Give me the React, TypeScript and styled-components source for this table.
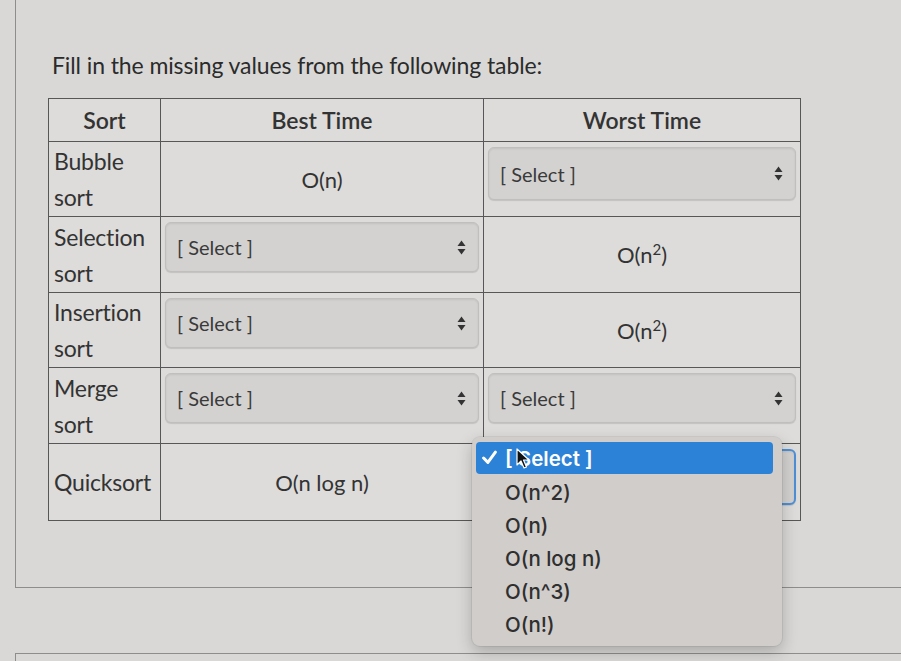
import React from "react";
import styled, { createGlobalStyle } from "styled-components";

const GlobalStyle = createGlobalStyle`
  html, body { margin: 0; padding: 0; }
  body {
    background: #d9d8d6;
    font-family: Lato, "Open Sans", sans-serif;
    color: #2e2e2e;
    width: 901px;
    height: 661px;
    overflow: hidden;
  }
`;

const Page = styled.div`
  padding-left: 15px;
`;

const Card = styled.section`
  border-left: 1px solid #8e8d8b;
  border-bottom: 1px solid #8e8d8b;
  padding: 52px 0 66px 32px;
`;

const NextCard = styled.section`
  margin-top: 65px;
  border-left: 1px solid #8e8d8b;
  border-top: 1px solid #8e8d8b;
  height: 20px;
`;

const Title = styled.h2`
  margin: 0 0 19px 4px;
  font-size: 23px;
  line-height: 27px;
  font-weight: 400;
  color: #2b2b2b;
  letter-spacing: -0.1px;
`;

const Table = styled.table`
  border-collapse: collapse;
  table-layout: fixed;
  width: 752px;
  background: #dddcda;
`;

const Row = styled.tr<{ $h: number }>`
  height: ${(p) => p.$h}px;
`;

const Head = styled.th`
  border: 1px solid #575757;
  font-size: 23px;
  font-weight: 600;
  color: #333;
  padding: 0;
  text-align: center;
  vertical-align: middle;
`;

const Label = styled.td`
  border: 1px solid #575757;
  font-size: 23px;
  line-height: 36px;
  padding: 1px 2px 1px 5px;
  color: #333;
  vertical-align: middle;
  letter-spacing: -0.2px;
`;

const Cell = styled.td<{ $align?: "top" | "middle" }>`
  position: relative;
  border: 1px solid #575757;
  padding: 5px 4px;
  font-size: 22px;
  text-align: center;
  vertical-align: ${(p) => p.$align ?? "middle"};
  color: #333;
`;

const SelectBox = styled.div<{ $focused?: boolean; $h?: number }>`
  display: flex;
  align-items: center;
  justify-content: space-between;
  height: ${(p) => p.$h ?? 50}px;
  box-sizing: border-box;
  padding: 0 12px 0 11px;
  border-radius: 6px;
  background: #d3d2d0;
  border: ${(p) => (p.$focused ? "2px solid #4d8fd6" : "1px solid #c0bfbd")};
  box-shadow: inset 0 1px 2px rgba(0, 0, 0, 0.08), 0 1px 1px rgba(0, 0, 0, 0.12);
  font-size: 20px;
  color: #3a3a3a;
  text-align: left;
`;

const Sup = styled.sup`
  font-size: 15px;
  line-height: 0;
`;

const Menu = styled.div`
  position: absolute;
  left: -12px;
  top: -7px;
  width: 310px;
  box-sizing: border-box;
  padding: 5px 9px 5px 4px;
  background: #d1cdcb;
  border-radius: 8px;
  box-shadow: 0 6px 16px rgba(0, 0, 0, 0.22), 0 0 0 1px rgba(0, 0, 0, 0.06);
  z-index: 5;
`;

const MenuItem = styled.div<{ $active?: boolean }>`
  position: relative;
  display: flex;
  align-items: center;
  height: ${(p) => (p.$active ? 32 : 33)}px;
  margin-bottom: ${(p) => (p.$active ? 2 : 0)}px;
  padding-left: 29px;
  border-radius: 4px;
  font-family: Inter, "Liberation Sans", sans-serif;
  font-size: 20.5px;
  font-weight: ${(p) => (p.$active ? 600 : 500)};
  color: ${(p) => (p.$active ? "#ffffff" : "#2f2f2f")};
  background: ${(p) => (p.$active ? "#2c82d6" : "transparent")};
  text-align: left;
`;

const Check = styled.span`
  position: absolute;
  left: 6px;
  top: 8px;
  display: flex;
`;

const Cursor = styled.span`
  position: absolute;
  left: 40px;
  top: 6px;
  display: flex;
`;

const Arrows = () => (
  <svg width="9" height="15" viewBox="0 0 9 15">
    <path d="M4.5 0.5 L8.5 6 L0.5 6 Z" fill="#333" />
    <path d="M4.5 14.5 L8.5 9 L0.5 9 Z" fill="#333" />
  </svg>
);

const Select = ({ focused, h }: { focused?: boolean; h?: number }) => (
  <SelectBox $focused={focused} $h={h}>
    <span>{focused ? "" : "[ Select ]"}</span>
    <Arrows />
  </SelectBox>
);

const options = ["O(n^2)", "O(n)", "O(n log n)", "O(n^3)", "O(n!)"];

export default function App() {
  return (
    <>
      <GlobalStyle />
      <Page>
        <Card>
          <Title>Fill in the missing values from the following table:</Title>
          <Table>
            <colgroup>
              <col style={{ width: 112 }} />
              <col style={{ width: 323 }} />
              <col style={{ width: 317 }} />
            </colgroup>
            <tbody>
              <Row $h={43}>
                <Head>Sort</Head>
                <Head>Best Time</Head>
                <Head>Worst Time</Head>
              </Row>
              <Row $h={75}>
                <Label>Bubble sort</Label>
                <Cell>O(n)</Cell>
                <Cell $align="top">
                  <Select h={53} />
                </Cell>
              </Row>
              <Row $h={76}>
                <Label>Selection sort</Label>
                <Cell $align="top">
                  <Select />
                </Cell>
                <Cell>
                  O(n<Sup>2</Sup>)
                </Cell>
              </Row>
              <Row $h={75}>
                <Label>Insertion sort</Label>
                <Cell $align="top">
                  <Select />
                </Cell>
                <Cell>
                  O(n<Sup>2</Sup>)
                </Cell>
              </Row>
              <Row $h={76}>
                <Label>Merge sort</Label>
                <Cell $align="top">
                  <Select />
                </Cell>
                <Cell $align="top">
                  <Select />
                </Cell>
              </Row>
              <Row $h={77}>
                <Label>Quicksort</Label>
                <Cell>O(n log n)</Cell>
                <Cell $align="top">
                  <Select focused h={56} />
                  <Menu>
                    <MenuItem $active>
                      <Check>
                        <svg width="15" height="15" viewBox="0 0 14 14">
                          <path
                            d="M1.5 7.5 L5.5 11.5 L12.5 2"
                            fill="none"
                            stroke="#fff"
                            strokeWidth="2.8"
                            strokeLinecap="round"
                            strokeLinejoin="round"
                          />
                        </svg>
                      </Check>
                      [ Select ]
                      <Cursor>
                        <svg width="14" height="22" viewBox="0 0 14 22">
                          <path
                            d="M1 1 L1 17 L5 13 L8 20 L10.5 19 L7.5 12 L13 12 Z"
                            fill="#111"
                            stroke="#fff"
                            strokeWidth="1.2"
                            strokeLinejoin="round"
                          />
                        </svg>
                      </Cursor>
                    </MenuItem>
                    {options.map((o) => (
                      <MenuItem key={o}>{o}</MenuItem>
                    ))}
                  </Menu>
                </Cell>
              </Row>
            </tbody>
          </Table>
        </Card>
        <NextCard />
      </Page>
    </>
  );
}
